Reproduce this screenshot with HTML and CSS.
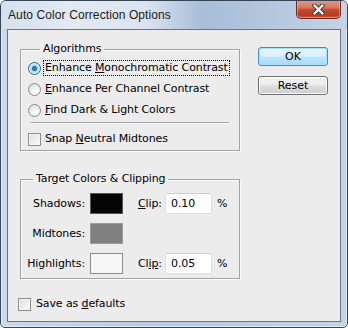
FILE: index.html
```html
<!DOCTYPE html>
<html lang="en">
<head>
    <meta charset="UTF-8">
    <title>Auto Color Correction Options</title>
    <link rel="stylesheet" href="styles.css">
</head>
<body>
    <div class="window">
        <div class="titlebar">
            <span class="title">Auto Color Correction Options</span>
            <button class="close" aria-label="Close">
                <svg width="13" height="11" viewBox="0 0 13 11">
                    <path d="M2.5 1.5 L10.5 9.5 M10.5 1.5 L2.5 9.5" stroke="#3b3b3b" stroke-width="4.4" stroke-linecap="round"/>
                    <path d="M2.5 1.5 L10.5 9.5 M10.5 1.5 L2.5 9.5" stroke="#ffffff" stroke-width="2.4" stroke-linecap="round"/>
                </svg>
            </button>
        </div>

        <div class="client">
            <div class="main">
                <div class="groups">
                    <!-- Algoritmos -->
                    <fieldset class="group algorithms">
                        <legend>Algorithms</legend>
                        <div class="option">
                            <span class="radio checked"></span>
                            <span class="label focus">Enhance <u>M</u>onochromatic Contrast</span>
                        </div>
                        <div class="option">
                            <span class="radio"></span>
                            <span class="label"><u>E</u>nhance Per Channel Contrast</span>
                        </div>
                        <div class="option">
                            <span class="radio"></span>
                            <span class="label"><u>F</u>ind Dark &amp; Light Colors</span>
                        </div>
                        <div class="separator"></div>
                        <div class="option">
                            <span class="checkbox"></span>
                            <span class="label">Snap <u>N</u>eutral Midtones</span>
                        </div>
                    </fieldset>

                    <!-- Cores alvo -->
                    <fieldset class="group targets">
                        <legend>Target Colors &amp; Clipping</legend>
                        <div class="target-grid">
                            <span class="target-label">Shadows:</span>
                            <span class="swatch shadows"></span>
                            <span class="clip-label"><u>C</u>lip:</span>
                            <span class="field">0.10</span>
                            <span class="unit">%</span>

                            <span class="target-label">Midtones:</span>
                            <span class="swatch midtones"></span>
                            <span></span>
                            <span></span>
                            <span></span>

                            <span class="target-label">Highlights:</span>
                            <span class="swatch highlights"></span>
                            <span class="clip-label">Cl<u>ip</u>:</span>
                            <span class="field">0.05</span>
                            <span class="unit">%</span>
                        </div>
                    </fieldset>
                </div>

                <div class="buttons">
                    <button class="btn default">OK</button>
                    <button class="btn">Reset</button>
                </div>
            </div>

            <div class="option save-row">
                <span class="checkbox"></span>
                <span class="label">Save as <u>d</u>efaults</span>
            </div>
        </div>
    </div>
</body>
</html>
```

FILE: styles.css
```css
body {
    margin: 0;
    padding: 0;
    font-family: "DejaVu Sans", Verdana, sans-serif;
    font-size: 11px;
    letter-spacing: -0.12px;
    color: #000;
}

/* Moldura da janela */
.window {
    width: 348px;
    height: 328px;
    box-sizing: border-box;
    border: 1px solid #374452;
    border-radius: 6px 6px 5px 5px;
    background: linear-gradient(90deg, #c9d8ea 0%, #b7cbe2 50%, #c3d4e8 100%);
    box-shadow: inset 0 0 0 1px rgba(255, 255, 255, 0.55);
    display: flex;
    flex-direction: column;
    overflow: hidden;
}

.titlebar {
    height: 28px;
    flex: none;
    display: flex;
    justify-content: space-between;
    align-items: flex-start;
    padding-left: 7px;
    padding-right: 6px;
    background: linear-gradient(90deg, #d3e0ee 0%, #e2eaf4 20%, #dae4f0 42%, #a8bdd7 58%, #b0c4dc 72%, #c4d4e7 100%);
}

.title {
    font-family: "Liberation Sans", Arial, sans-serif;
    font-size: 12px;
    line-height: 28px;
    color: #1a1a1a;
    letter-spacing: 0.1px;
}

.close {
    width: 45px;
    height: 19px;
    margin-top: -1px;
    padding: 0;
    border: 1px solid #6b2b21;
    border-top: none;
    border-radius: 0 0 5px 5px;
    background: linear-gradient(#e39a88 0%, #d67b65 40%, #c44a30 55%, #bb3820 85%, #cf5a3c 100%);
    box-shadow: inset 0 0 0 1px rgba(255, 210, 200, 0.45);
    display: flex;
    align-items: center;
    justify-content: center;
}

/* Area cliente */
.client {
    flex: 1;
    margin: 0 6px 5px 6px;
    border: 1px solid #66758a;
    background-color: #ececec;
    padding: 12px 12px 0 12px;
    display: flex;
    flex-direction: column;
}

.main {
    display: flex;
    gap: 18px;
}

.groups {
    width: 220px;
    display: flex;
    flex-direction: column;
    gap: 21px;
}

.group {
    margin: 0;
    border: 1px solid #a3a3a3;
    box-shadow: inset 1px 1px 0 #fbfbfb, 1px 1px 0 #fbfbfb;
    min-width: 0;
}

.group legend {
    margin-left: 12px;
    padding: 0 3px;
    line-height: 14px;
}

.algorithms {
    padding: 2px 0 1px 7px;
}

.option {
    height: 20px;
    display: flex;
    align-items: center;
    gap: 1px;
}

.algorithms .option + .option {
    margin-top: 1px;
}

.label {
    border: 1px dotted transparent;
    padding: 0 1px;
    line-height: 14px;
    white-space: nowrap;
}

.label.focus {
    border-color: #000;
}

.radio {
    width: 11px;
    height: 11px;
    border: 1px solid #8b8b8b;
    border-radius: 50%;
    background: radial-gradient(circle at 60% 70%, #ffffff 0%, #f0f0f0 45%, #cfcfcf 100%);
    flex: none;
    margin-right: 1px;
}

.radio.checked {
    border-color: #2c628b;
    background: radial-gradient(circle, #2b87d1 0%, #1f6fb5 28%, #9cd3f4 36%, #e6f4fc 70%, #cfe7f5 100%);
}

.checkbox {
    width: 11px;
    height: 11px;
    border: 1px solid #8e8f8f;
    background: linear-gradient(135deg, #dcdcdc 0%, #f0f0f0 60%, #ffffff 100%);
    box-shadow: inset 0 0 0 1px #f4f4f4;
    flex: none;
    margin-right: 1px;
}

.separator {
    margin: 2px 10px 5px 3px;
    border-top: 1px solid #a3a3a3;
    border-bottom: 1px solid #fbfbfb;
}

/* Grade de cores alvo */
.targets {
    padding: 6px 0 4px 0;
}

.target-grid {
    display: grid;
    grid-template-columns: 69px 48px 27px 52px auto;
    grid-auto-rows: 22px;
    row-gap: 8px;
    align-items: center;
}

.target-label {
    text-align: right;
    padding-right: 5px;
}

.swatch {
    width: 31px;
    height: 19px;
    border: 1px solid #8d8d8d;
}

.swatch.shadows {
    background-color: #050505;
    border-color: #555555;
}

.swatch.midtones {
    background-color: #808080;
    border-color: #9b9b9b;
}

.swatch.highlights {
    background-color: #f6f6f6;
}

.field {
    width: 40px;
    height: 19px;
    box-sizing: content-box;
    padding-left: 5px;
    background-color: #fff;
    border: 1px solid #dedede;
    border-top-color: #cfcfcf;
    border-radius: 2px;
    line-height: 19px;
}

/* Botoes */
.buttons {
    margin-top: 5px;
    display: flex;
    flex-direction: column;
    gap: 10px;
}

.btn {
    width: 70px;
    height: 19px;
    padding: 0;
    font-family: "DejaVu Sans", Verdana, sans-serif;
    font-size: 11px;
    color: #000;
    border: 1px solid #707070;
    border-radius: 3px;
    background: linear-gradient(#f2f2f2 0%, #ebebeb 48%, #dddddd 52%, #cfcfcf 100%);
    box-shadow: inset 0 0 0 1px #fcfcfc;
}

.btn.default {
    border-color: #3c8fc8;
    background: linear-gradient(#eaf6fd 0%, #d9f0fc 48%, #bee6fd 52%, #a7d9f5 100%);
    box-shadow: inset 0 0 0 1px #a8e2ff;
}

.save-row {
    margin-top: 15px;
    margin-left: -2px;
    gap: 2px;
}
```
